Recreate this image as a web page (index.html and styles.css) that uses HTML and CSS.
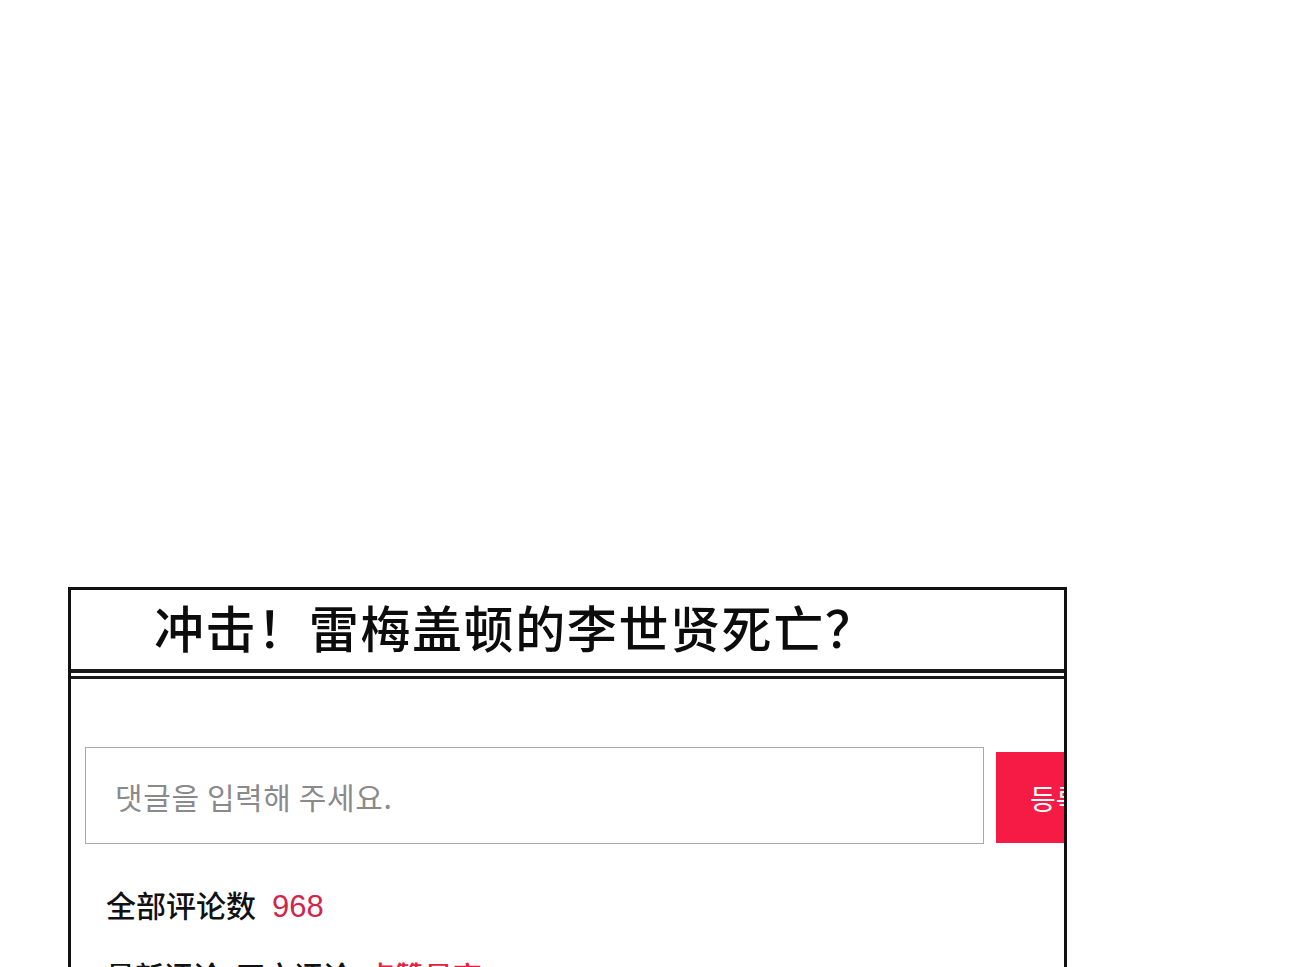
FILE: index.html
```html
<!DOCTYPE html>
<html lang="zh">
<head>
<meta charset="utf-8">
<title>评论</title>
<link rel="stylesheet" href="styles.css">
</head>
<body>
<div class="panel">
  <div class="title-bar">
    <h1 class="title">冲击！雷梅盖顿的李世贤死亡？</h1>
  </div>
  <div class="double-rule"></div>
  <div class="content">
    <div class="comment-form">
      <input class="comment-input" type="text" placeholder="댓글을 입력해 주세요.">
      <button class="submit-btn" type="button">등록</button>
    </div>
    <div class="count-row">
      <span class="count-label">全部评论数</span>
      <span class="count-num">968</span>
    </div>
    <div class="sort-row">
      <span class="sort-item">最新评论</span>
      <span class="sort-item">正文评论</span>
      <span class="sort-item active">点赞最高</span>
    </div>
  </div>
</div>
</body>
</html>
```

FILE: styles.css
```css
html, body {
  margin: 0;
  padding: 0;
  overflow: hidden;
  background: #ffffff;
  height: 100%;
}

body {
  font-family: "Noto Sans CJK SC", "Noto Sans CJK KR", sans-serif;
  color: #111111;
}

.panel {
  margin: 587px 0 0 68px;
  width: 999px;
  height: 520px;
  box-sizing: border-box;
  border: 3px solid #111111;
  border-bottom: none;
  overflow: hidden;
}

.title-bar {
  height: 79px;
  box-sizing: border-box;
  padding: 0 0 8px 83px;
  display: flex;
  align-items: center;
}

.title {
  margin: 0;
  font-size: 50px;
  line-height: 1;
  font-weight: 500;
  color: #0c0c0c;
  letter-spacing: 1.6px;
}

.double-rule {
  height: 3px;
  border-top: 4px solid #1a1a1a;
  border-bottom: 3px solid #1a1a1a;
}

.content {
  padding: 68px 0 0 14px;
}

.comment-form {
  display: flex;
  align-items: flex-end;
  gap: 12px;
}

.comment-input {
  flex: 0 0 auto;
  width: 899px;
  height: 97px;
  box-sizing: border-box;
  border: 1px solid #a9a9a9;
  padding: 0 0 0 29px;
  margin: 0;
  font-family: "Noto Sans CJK KR", sans-serif;
  font-size: 30px;
  letter-spacing: 0.6px;
  color: #333333;
  background: #ffffff;
  outline: none;
}

.comment-input::placeholder {
  color: #8a8a8a;
}

.submit-btn {
  flex: 0 0 auto;
  width: 124px;
  height: 91px;
  margin: 0 0 1px 0;
  border: none;
  background: #f51b45;
  color: #ffffff;
  font-family: "Noto Sans CJK KR", sans-serif;
  font-size: 28px;
  text-align: left;
  padding: 0 0 0 34px;
  box-sizing: border-box;
}

.count-row {
  margin-top: 45px;
  padding-left: 21px;
  display: flex;
  align-items: baseline;
  gap: 16px;
  font-size: 30px;
  line-height: 1;
}

.count-label {
  color: #111111;
  font-weight: 500;
}

.count-num {
  font-family: "Liberation Sans", Arial, sans-serif;
  color: #d0264d;
  font-size: 31px;
}

.sort-row {
  margin-top: 39px;
  padding-left: 21px;
  display: flex;
  gap: 14px;
  font-size: 29px;
  line-height: 1;
  font-weight: 500;
}

.sort-item {
  color: #111111;
}

.sort-item.active {
  color: #e3203f;
}
```
